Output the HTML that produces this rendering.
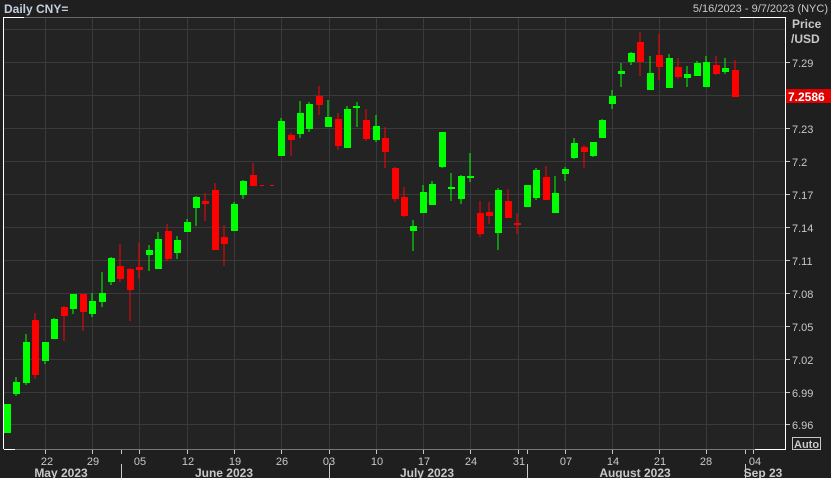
<!DOCTYPE html>
<html><head><meta charset="utf-8"><style>
html,body{margin:0;padding:0;background:#1f1f1f;width:831px;height:478px;overflow:hidden}
svg{display:block}
text{font-family:"Liberation Sans",sans-serif;}
</style></head><body>
<svg width="831" height="478" viewBox="0 0 831 478" xmlns="http://www.w3.org/2000/svg">
<rect width="831" height="478" fill="#1f1f1f"/>
<rect x="4" y="17" width="781" height="432" fill="#232323"/>
<g stroke="#3a3a3a" stroke-width="1">
<line x1="4" y1="29.5" x2="785" y2="29.5"/>
<line x1="4" y1="62.5" x2="785" y2="62.5"/>
<line x1="4" y1="95.5" x2="785" y2="95.5"/>
<line x1="4" y1="128.5" x2="785" y2="128.5"/>
<line x1="4" y1="161.5" x2="785" y2="161.5"/>
<line x1="4" y1="194.5" x2="785" y2="194.5"/>
<line x1="4" y1="227.5" x2="785" y2="227.5"/>
<line x1="4" y1="260.5" x2="785" y2="260.5"/>
<line x1="4" y1="293.5" x2="785" y2="293.5"/>
<line x1="4" y1="326.5" x2="785" y2="326.5"/>
<line x1="4" y1="359.5" x2="785" y2="359.5"/>
<line x1="4" y1="392.5" x2="785" y2="392.5"/>
<line x1="4" y1="424.5" x2="785" y2="424.5"/>
<line x1="45.5" y1="17" x2="45.5" y2="449"/>
<line x1="92.5" y1="17" x2="92.5" y2="449"/>
<line x1="139.5" y1="17" x2="139.5" y2="449"/>
<line x1="187.5" y1="17" x2="187.5" y2="449"/>
<line x1="234.5" y1="17" x2="234.5" y2="449"/>
<line x1="281.5" y1="17" x2="281.5" y2="449"/>
<line x1="329.5" y1="17" x2="329.5" y2="449"/>
<line x1="376.5" y1="17" x2="376.5" y2="449"/>
<line x1="423.5" y1="17" x2="423.5" y2="449"/>
<line x1="470.5" y1="17" x2="470.5" y2="449"/>
<line x1="518.5" y1="17" x2="518.5" y2="449"/>
<line x1="565.5" y1="17" x2="565.5" y2="449"/>
<line x1="612.5" y1="17" x2="612.5" y2="449"/>
<line x1="659.5" y1="17" x2="659.5" y2="449"/>
<line x1="706.5" y1="17" x2="706.5" y2="449"/>
<line x1="753.5" y1="17" x2="753.5" y2="449"/>
</g>
<!-- frame -->
<line x1="4" y1="17.5" x2="785" y2="17.5" stroke="#666"/>
<line x1="4" y1="17.5" x2="24" y2="17.5" stroke="#fff"/>
<line x1="740" y1="17.5" x2="785" y2="17.5" stroke="#fff"/>
<line x1="3.5" y1="17" x2="3.5" y2="449" stroke="#fff"/>
<line x1="785.5" y1="17" x2="785.5" y2="450" stroke="#fff"/>
<line x1="4" y1="449.5" x2="785" y2="449.5" stroke="#777"/>
<line x1="4" y1="449.5" x2="15" y2="449.5" stroke="#fff"/>
<line x1="755" y1="449.5" x2="785" y2="449.5" stroke="#fff"/>
<g id="c"></g>
<!-- header -->
<text x="4" y="13" font-size="12" font-weight="bold" fill="#c5cfdc">Daily CNY=</text>
<text x="828" y="12" font-size="11" fill="#c8c8c8" text-anchor="end">5/16/2023 - 9/7/2023 (NYC)</text>
<text x="792" y="28" font-size="12" font-weight="bold" fill="#c8c8c8">Price</text>
<text x="791" y="43" font-size="12" font-weight="bold" fill="#c8c8c8">/USD</text>
<g font-size="11" fill="#c8c8c8" stroke="none">
<text x="792" y="67">7.29</text>
<text x="792" y="133">7.23</text>
<text x="792" y="166">7.2</text>
<text x="792" y="199">7.17</text>
<text x="792" y="232">7.14</text>
<text x="792" y="265">7.11</text>
<text x="792" y="298">7.08</text>
<text x="792" y="331">7.05</text>
<text x="792" y="364">7.02</text>
<text x="792" y="397">6.99</text>
<text x="792" y="429">6.96</text>
</g>
<g stroke="#c8c8c8">
<line x1="786" y1="62.5" x2="790" y2="62.5"/><line x1="786" y1="128.5" x2="790" y2="128.5"/>
<line x1="786" y1="161.5" x2="790" y2="161.5"/><line x1="786" y1="194.5" x2="790" y2="194.5"/>
<line x1="786" y1="227.5" x2="790" y2="227.5"/><line x1="786" y1="260.5" x2="790" y2="260.5"/>
<line x1="786" y1="293.5" x2="790" y2="293.5"/><line x1="786" y1="326.5" x2="790" y2="326.5"/>
<line x1="786" y1="359.5" x2="790" y2="359.5"/><line x1="786" y1="392.5" x2="790" y2="392.5"/>
<line x1="786" y1="424.5" x2="790" y2="424.5"/>
</g>
<rect x="786" y="89" width="45" height="14" fill="#e00000"/>
<text x="788" y="101" font-size="12" font-weight="bold" fill="#fff">7.2586</text>
<rect x="792.5" y="437.5" width="28" height="12" fill="none" stroke="#c8c8c8"/>
<text x="794" y="448" font-size="11" font-weight="bold" fill="#c8c8c8">Auto</text>
<!-- x axis -->
<g font-size="11" fill="#c8c8c8" text-anchor="middle">
<text x="47" y="465">22</text><text x="93" y="465">29</text><text x="140" y="465">05</text>
<text x="188" y="465">12</text><text x="235" y="465">19</text><text x="282" y="465">26</text>
<text x="329" y="465">03</text><text x="377" y="465">10</text><text x="424" y="465">17</text>
<text x="471" y="465">24</text><text x="519" y="465">31</text><text x="566" y="465">07</text>
<text x="613" y="465">14</text><text x="660" y="465">21</text><text x="706" y="465">28</text>
<text x="755" y="465">04</text>
</g>
<g font-size="12" font-weight="bold" fill="#c8c8c8" text-anchor="middle">
<text x="61" y="477">May 2023</text><text x="224" y="477">June 2023</text>
<text x="427" y="477">July 2023</text><text x="635" y="477">August 2023</text>
<text x="763" y="477">Sep 23</text>
</g>
<g stroke="#c8c8c8">
<line x1="121.5" y1="464" x2="121.5" y2="478"/><line x1="329.5" y1="464" x2="329.5" y2="478"/>
<line x1="527.5" y1="464" x2="527.5" y2="478"/><line x1="745.5" y1="464" x2="745.5" y2="478"/>
<line x1="45.5" y1="450" x2="45.5" y2="454"/><line x1="92.5" y1="450" x2="92.5" y2="454"/>
<line x1="139.5" y1="450" x2="139.5" y2="454"/><line x1="187.5" y1="450" x2="187.5" y2="454"/>
<line x1="234.5" y1="450" x2="234.5" y2="454"/><line x1="281.5" y1="450" x2="281.5" y2="454"/>
<line x1="329.5" y1="450" x2="329.5" y2="454"/><line x1="376.5" y1="450" x2="376.5" y2="454"/>
<line x1="423.5" y1="450" x2="423.5" y2="454"/><line x1="470.5" y1="450" x2="470.5" y2="454"/>
<line x1="518.5" y1="450" x2="518.5" y2="454"/><line x1="565.5" y1="450" x2="565.5" y2="454"/>
<line x1="612.5" y1="450" x2="612.5" y2="454"/><line x1="659.5" y1="450" x2="659.5" y2="454"/>
<line x1="706.5" y1="450" x2="706.5" y2="454"/><line x1="753.5" y1="450" x2="753.5" y2="454"/>
<line x1="121.5" y1="450" x2="121.5" y2="454"/><line x1="527.5" y1="450" x2="527.5" y2="454"/>
<line x1="745.5" y1="450" x2="745.5" y2="454"/>
</g>
<!-- candles -->
<g>
<!-- format via rects: wick then body -->
<g fill="#00ff00">
<rect x="4" y="404" width="7" height="29"/>
<rect x="15.5" y="377" width="1" height="19"/><rect x="13" y="382" width="7" height="12"/>
<rect x="25.5" y="334" width="1" height="51"/><rect x="23" y="342" width="7" height="41"/>
<rect x="44.5" y="342" width="1" height="22"/><rect x="42" y="342" width="7" height="19"/>
<rect x="53.5" y="318" width="1" height="21"/><rect x="51" y="319" width="7" height="20"/>
<rect x="72.5" y="294" width="1" height="20"/><rect x="70" y="294" width="7" height="15"/>
<rect x="91.5" y="293" width="1" height="24"/><rect x="89" y="301" width="7" height="13"/>
<rect x="101.5" y="272" width="1" height="35"/><rect x="99" y="293" width="7" height="9"/>
<rect x="110.5" y="257" width="1" height="28"/><rect x="108" y="258" width="7" height="24"/>
<rect x="148.5" y="245" width="1" height="26"/><rect x="146" y="250" width="7" height="5"/>
<rect x="157.5" y="232" width="1" height="37"/><rect x="155" y="239" width="7" height="30"/>
<rect x="176.5" y="236" width="1" height="23"/><rect x="174" y="240" width="7" height="13"/>
<rect x="186.5" y="219" width="1" height="13"/><rect x="184" y="222" width="7" height="10"/>
<rect x="195.5" y="196" width="1" height="30"/><rect x="193" y="197" width="7" height="11"/>
<rect x="233.5" y="202" width="1" height="29"/><rect x="231" y="204" width="7" height="27"/>
<rect x="242.5" y="180" width="1" height="19"/><rect x="240" y="181" width="7" height="14"/>
<rect x="280.5" y="118" width="1" height="38"/><rect x="278" y="121" width="7" height="35"/>
<rect x="299.5" y="101" width="1" height="37"/><rect x="297" y="113" width="7" height="21"/>
<rect x="308.5" y="102" width="1" height="30"/><rect x="306" y="104" width="7" height="25"/>
<rect x="327.5" y="100" width="1" height="27"/><rect x="325" y="117" width="7" height="10"/>
<rect x="346.5" y="106" width="1" height="42"/><rect x="344" y="109" width="7" height="39"/>
<rect x="356.5" y="102" width="1" height="25"/><rect x="353" y="106" width="7" height="2"/>
<rect x="375.5" y="115" width="1" height="27"/><rect x="373" y="126" width="7" height="14"/>
<rect x="412.5" y="220" width="1" height="31"/><rect x="410" y="226" width="7" height="5"/>
<rect x="422.5" y="185" width="1" height="28"/><rect x="420" y="192" width="7" height="21"/>
<rect x="431.5" y="181" width="1" height="24"/><rect x="429" y="184" width="7" height="21"/>
<rect x="441.5" y="132" width="1" height="36"/><rect x="439" y="132" width="7" height="35"/>
<rect x="450.5" y="173" width="1" height="28"/><rect x="448" y="187" width="7" height="2"/>
<rect x="460.5" y="175" width="1" height="29"/><rect x="458" y="176" width="7" height="23"/>
<rect x="469.5" y="153" width="1" height="29"/><rect x="467" y="176" width="7" height="2"/>
<rect x="497.5" y="188" width="1" height="62"/><rect x="495" y="190" width="7" height="43"/>
<rect x="526.5" y="185" width="1" height="22"/><rect x="524" y="185" width="7" height="22"/>
<rect x="535.5" y="168" width="1" height="32"/><rect x="533" y="170" width="7" height="28"/>
<rect x="554.5" y="176" width="1" height="37"/><rect x="552" y="193" width="7" height="20"/>
<rect x="564.5" y="167" width="1" height="14"/><rect x="562" y="169" width="7" height="5"/>
<rect x="573.5" y="138" width="1" height="21"/><rect x="571" y="143" width="7" height="15"/>
<rect x="592.5" y="142" width="1" height="15"/><rect x="590" y="142" width="7" height="14"/>
<rect x="601.5" y="119" width="1" height="19"/><rect x="599" y="120" width="7" height="18"/>
<rect x="611.5" y="90" width="1" height="19"/><rect x="609" y="96" width="7" height="8"/>
<rect x="620.5" y="63" width="1" height="24"/><rect x="618" y="71" width="7" height="3"/>
<rect x="630.5" y="52" width="1" height="13"/><rect x="628" y="53" width="7" height="9"/>
<rect x="649.5" y="56" width="1" height="34"/><rect x="647" y="73" width="7" height="17"/>
<rect x="668.5" y="54" width="1" height="34"/><rect x="666" y="58" width="7" height="30"/>
<rect x="686.5" y="66" width="1" height="21"/><rect x="684" y="74" width="7" height="4"/>
<rect x="696.5" y="61" width="1" height="15"/><rect x="694" y="63" width="7" height="13"/>
<rect x="705.5" y="56" width="1" height="31"/><rect x="703" y="62" width="7" height="25"/>
<rect x="724.5" y="58" width="1" height="16"/><rect x="722" y="68" width="7" height="4"/>
</g>
<g fill="#ff0000">
<rect x="34.5" y="313" width="1" height="66"/><rect x="32" y="320" width="7" height="55"/>
<rect x="63.5" y="306" width="1" height="35"/><rect x="61" y="307" width="7" height="9"/>
<rect x="82.5" y="294" width="1" height="37"/><rect x="80" y="294" width="7" height="18"/>
<rect x="119.5" y="244" width="1" height="38"/><rect x="117" y="266" width="7" height="13"/>
<rect x="129.5" y="268" width="1" height="53"/><rect x="127" y="269" width="7" height="21"/>
<rect x="138.5" y="243" width="1" height="36"/><rect x="136" y="267" width="7" height="3"/>
<rect x="166.5" y="224" width="1" height="37"/><rect x="165" y="231" width="7" height="28"/>
<rect x="204.5" y="193" width="1" height="28"/><rect x="202" y="201" width="7" height="3"/>
<rect x="214.5" y="183" width="1" height="67"/><rect x="212" y="190" width="7" height="60"/>
<rect x="223.5" y="225" width="1" height="41"/><rect x="221" y="237" width="7" height="7"/>
<rect x="252.5" y="163" width="1" height="23"/><rect x="250" y="175" width="7" height="11"/>
<rect x="260" y="185" width="4" height="1"/><rect x="270" y="185" width="4" height="1"/>
<rect x="290.5" y="133" width="1" height="23"/><rect x="288" y="135" width="7" height="5"/>
<rect x="318.5" y="86" width="1" height="29"/><rect x="316" y="96" width="7" height="9"/>
<rect x="337.5" y="113" width="1" height="37"/><rect x="335" y="119" width="7" height="27"/>
<rect x="365.5" y="109" width="1" height="32"/><rect x="363" y="120" width="7" height="19"/>
<rect x="384.5" y="127" width="1" height="41"/><rect x="382" y="138" width="7" height="14"/>
<rect x="394.5" y="167" width="1" height="35"/><rect x="392" y="168" width="7" height="31"/>
<rect x="403.5" y="187" width="1" height="30"/><rect x="401" y="197" width="7" height="19"/>
<rect x="479.5" y="201" width="1" height="36"/><rect x="477" y="213" width="7" height="21"/>
<rect x="488.5" y="202" width="1" height="22"/><rect x="486" y="212" width="7" height="4"/>
<rect x="507.5" y="189" width="1" height="29"/><rect x="505" y="201" width="7" height="17"/>
<rect x="516.5" y="213" width="1" height="21"/><rect x="514" y="223" width="7" height="2"/>
<rect x="545.5" y="166" width="1" height="34"/><rect x="543" y="177" width="7" height="23"/>
<rect x="583.5" y="145" width="1" height="23"/><rect x="581" y="147" width="7" height="5"/>
<rect x="639.5" y="32" width="1" height="44"/><rect x="637" y="42" width="7" height="20"/>
<rect x="658.5" y="34" width="1" height="46"/><rect x="656" y="55" width="7" height="12"/>
<rect x="677.5" y="58" width="1" height="21"/><rect x="675" y="67" width="7" height="10"/>
<rect x="715.5" y="56" width="1" height="19"/><rect x="713" y="65" width="7" height="9"/>
<rect x="734.5" y="60" width="1" height="37"/><rect x="732" y="70" width="7" height="27"/>
</g>
</g>
</svg>
</body></html>
